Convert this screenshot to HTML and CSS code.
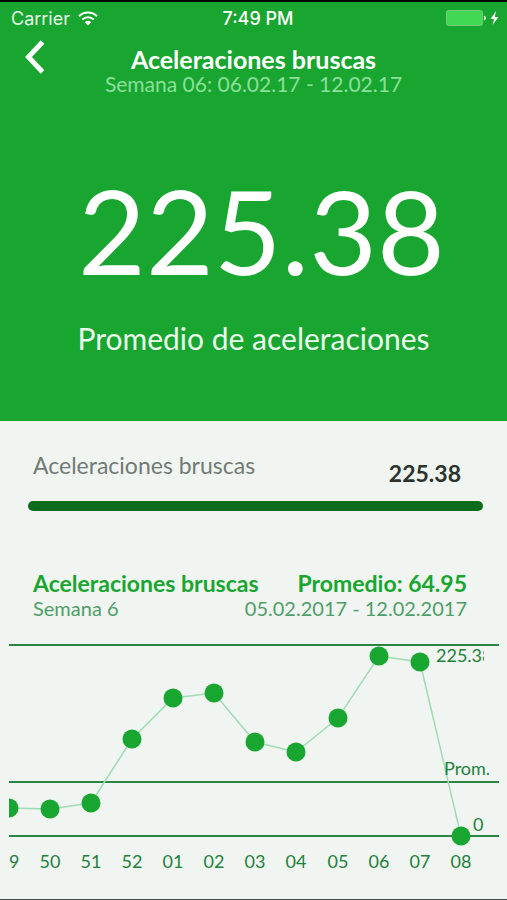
FILE: index.html
```html
<!DOCTYPE html>
<html lang="es">
<head>
  <meta charset="UTF-8" />
  <meta name="viewport" content="width=device-width, initial-scale=1.0"/>
  <title>Aceleraciones bruscas</title>
  <link rel="stylesheet" href="styles.css">
</head>
<body>
  <section class="hero">
    <div class="status-bar">
      <div class="carrier">
        <span>Carrier</span>
        <svg width="20" height="15" viewBox="0 0 20 15" fill="none" stroke="#fff" stroke-width="2">
          <path d="M1 5.2C6 .2 14 .2 19 5.2" />
          <path d="M4.2 8.6C7.4 5.4 12.6 5.4 15.8 8.6" />
          <path d="M6.8 11.2C8.6 9.4 11.4 9.4 13.2 11.2L10 14.4Z" fill="#fff" stroke="none" />
        </svg>
      </div>
      <span class="time">7:49 PM</span>
      <div class="battery">
        <svg width="54" height="18" viewBox="0 0 54 18">
          <rect x="1.5" y="1.5" width="36" height="15" rx="2" fill="#43d854" stroke="#70cd78" />
          <path d="M39 6.5Q41 7 41 9T39 11.5Z" fill="#d8f5dc" />
          <path d="M51 2L45.5 10H49L47.5 16L53.5 8H49.8Z" fill="#fff" />
        </svg>
      </div>
    </div>

    <header>
      <button class="back-btn" type="button" aria-label="Volver">
        <svg width="20" height="34" viewBox="0 0 20 34" fill="none" stroke="#fff" stroke-width="5">
          <path d="M17.5 2L3.5 17L17.5 32" />
        </svg>
      </button>
      <div class="titles">
        <h1>Aceleraciones bruscas</h1>
        <p>Semana 06: 06.02.17 - 12.02.17</p>
      </div>
    </header>

    <div class="summary">
      <p class="big-number">225.38</p>
      <p class="caption">Promedio de aceleraciones</p>
    </div>
  </section>

  <main>
    <div class="metric">
      <span class="metric-name">Aceleraciones bruscas</span>
      <span class="metric-value">225.38</span>
    </div>
    <div class="bar"></div>

    <div class="chart-head">
      <div class="row">
        <h2>Aceleraciones bruscas</h2>
        <h2>Promedio: 64.95</h2>
      </div>
      <div class="row">
        <p>Semana 6</p>
        <p>05.02.2017 - 12.02.2017</p>
      </div>
    </div>

    <svg class="chart" viewBox="0 0 490 240">
      <defs>
        <clipPath id="max-clip"><rect x="420" y="0" width="55" height="30" /></clipPath>
      </defs>
      <g class="guides">
        <path d="M0 5H490" />
        <path d="M0 142H490" />
        <path d="M0 196H490" />
      </g>
      <polyline class="line" points="0,168 41,169 82,163 123,99 164,58 205,53 246,102 287,112 329,78 370,16 411,22 452,196" />
      <g class="dots">
        <circle cx="0" cy="168" r="9.5" />
        <circle cx="41" cy="169" r="9.5" />
        <circle cx="82" cy="163" r="9.5" />
        <circle cx="123" cy="99" r="9.5" />
        <circle cx="164" cy="58" r="9.5" />
        <circle cx="205" cy="53" r="9.5" />
        <circle cx="246" cy="102" r="9.5" />
        <circle cx="287" cy="112" r="9.5" />
        <circle cx="329" cy="78" r="9.5" />
        <circle cx="370" cy="16" r="9.5" />
        <circle cx="411" cy="22" r="9.5" />
        <circle cx="452" cy="196" r="9.5" />
      </g>
      <g class="labels">
        <text x="427" y="22" clip-path="url(#max-clip)">225.38</text>
        <text x="435" y="135">Prom.</text>
        <text x="464" y="191">0</text>
      </g>
      <g class="labels weeks">
        <text x="0" y="228">49</text>
        <text x="41" y="228">50</text>
        <text x="82" y="228">51</text>
        <text x="123" y="228">52</text>
        <text x="164" y="228">01</text>
        <text x="205" y="228">02</text>
        <text x="246" y="228">03</text>
        <text x="287" y="228">04</text>
        <text x="329" y="228">05</text>
        <text x="370" y="228">06</text>
        <text x="411" y="228">07</text>
        <text x="452" y="228">08</text>
      </g>
    </svg>
  </main>
</body>
</html>
```
FILE: styles.css
```css
* {
  box-sizing: border-box;
}

body {
  margin: 0;
  min-height: 100vh;
  display: flex;
  flex-direction: column;
  font-family: Lato, sans-serif;
  background-color: #f0f5f1;
  border-bottom: 1px solid #444a4a;
}

h1, h2, p {
  margin: 0;
}

.hero {
  background-color: #18a530;
  color: #fff;
  border-top: 2px solid #000;
  padding-bottom: 63px;
}

.status-bar {
  display: grid;
  grid-template-columns: 1fr auto 1fr;
  align-items: center;
  height: 32px;
  padding: 0 8px 0 11px;
  font-family: Inter, sans-serif;
  font-size: 18px;
}

.carrier {
  display: flex;
  align-items: center;
  gap: 8px;
  color: #e4f7e7;
}

.time {
  padding-left: 6px;
  font-weight: 500;
}

.battery {
  display: flex;
  justify-content: flex-end;
}

header {
  display: grid;
  grid-template-columns: 56px 1fr 56px;
  align-items: start;
  padding-top: 6px;
}

.back-btn {
  display: flex;
  background: none;
  border: none;
  padding: 0 0 0 25px;
  cursor: pointer;
}

.titles {
  text-align: center;
  padding-top: 6px;
}

h1 {
  font-size: 25px;
  line-height: 26px;
}

.titles p {
  font-size: 21px;
  line-height: 24px;
  color: #8be09a;
}

.summary {
  text-align: center;
  padding-top: 66px;
}

.big-number {
  padding-left: 16px;
  font-size: 117px;
  line-height: 136px;
}

.caption {
  margin-top: 20px;
  font-size: 30px;
  line-height: 40px;
  color: #e9faec;
}

.metric {
  display: flex;
  justify-content: space-between;
  padding: 28px 46px 0 33px;
  font-size: 23px;
  line-height: 32px;
}

.metric-name {
  color: #727a74;
}

.metric-value {
  padding-top: 8px;
  font-weight: bold;
  color: #2c332e;
}

.bar {
  height: 10px;
  margin: 12px 24px 0 28px;
  border-radius: 5px;
  background-color: #0c6b1d;
}

.chart-head {
  padding: 59px 40px 0 33px;
}

.row {
  display: flex;
  justify-content: space-between;
}

.row h2 {
  font-size: 23px;
  line-height: 26px;
  color: #18a530;
}

.row p {
  font-size: 20px;
  line-height: 24px;
  color: #4f9d68;
}

.chart {
  display: block;
  margin: 20px 8px 0 9px;
  overflow: hidden;
}

.guides {
  stroke: #2b8443;
  stroke-width: 2;
}

.line {
  fill: none;
  stroke: #9edcb4;
  stroke-width: 1.5;
}

.dots {
  fill: #18a530;
}

.labels {
  font-size: 18px;
  fill: #23803c;
}

.weeks {
  text-anchor: middle;
}
```
